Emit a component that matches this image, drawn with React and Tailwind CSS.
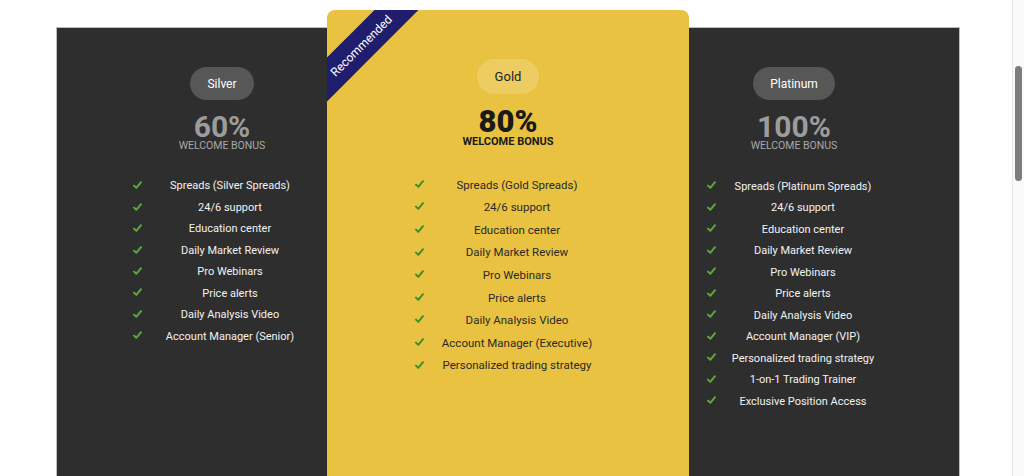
import React from 'react';

const silverFeatures = [
  'Spreads (Silver Spreads)',
  '24/6 support',
  'Education center',
  'Daily Market Review',
  'Pro Webinars',
  'Price alerts',
  'Daily Analysis Video',
  'Account Manager (Senior)',
];

const goldFeatures = [
  'Spreads (Gold Spreads)',
  '24/6 support',
  'Education center',
  'Daily Market Review',
  'Pro Webinars',
  'Price alerts',
  'Daily Analysis Video',
  'Account Manager (Executive)',
  'Personalized trading strategy',
];

const platinumFeatures = [
  'Spreads (Platinum Spreads)',
  '24/6 support',
  'Education center',
  'Daily Market Review',
  'Pro Webinars',
  'Price alerts',
  'Daily Analysis Video',
  'Account Manager (VIP)',
  'Personalized trading strategy',
  '1-on-1 Trading Trainer',
  'Exclusive Position Access',
];

const Check = ({ color }) => (
  <svg width="9" height="8" viewBox="0 0 9 8" className="-mt-[3px]">
    <path d="M1 4.6 L3.3 6.8 L8 1.2" fill="none" stroke={color} strokeWidth="2" strokeLinecap="round" strokeLinejoin="round" />
  </svg>
);

const FeatureList = ({ items, className, rowClass, textClass, checkColor }) => (
  <ul className={className}>
    {items.map((item) => (
      <li key={item} className={`flex items-center ${rowClass}`}>
        <span className="w-[20px] flex items-center">
          <Check color={checkColor} />
        </span>
        <span className={`flex-1 text-center whitespace-nowrap ${textClass}`}>{item}</span>
      </li>
    ))}
  </ul>
);

const App = () => {
  return (
    <div className="flex h-[476px] overflow-hidden bg-white font-['Roboto',sans-serif]">
      <div className="flex-1 pt-[10px] pl-[56px]">
        <div className="grid grid-cols-[271px_362px_271px] w-[904px] h-full">
          {/* Silver */}
          <div className="mt-[17px] bg-[#2e2e2e] border-t border-l border-[#bdbdbd] pl-[60px] flex flex-col items-center pt-[39px]">
            <div className="h-[33px] px-[17px] rounded-full bg-[#575757] text-white text-[12px] flex items-center">Silver</div>
            <div className="mt-[14px] text-[30px] leading-[26px] font-bold text-[#9c9c9c]">60%</div>
            <div className="text-[10.5px] leading-[12px] text-[#a8a8a8]">WELCOME BONUS</div>
            <FeatureList
              items={silverFeatures}
              className="mt-[24px] ml-[16px] w-[174px] self-start"
              rowClass="h-[21.45px]"
              textClass="text-[11px] text-[#f2f2f2]"
              checkColor="#5ea83a"
            />
          </div>

          {/* Gold */}
          <div className="relative overflow-hidden rounded-t-[8px] bg-[#e8c240] flex flex-col items-center pt-[49px]">
            <div className="absolute left-[-46px] top-[20px] w-[160px] h-[31px] -rotate-45 bg-[#1f1d6e] text-white text-[12px] flex items-center justify-center">
              Recommended
            </div>
            <div className="h-[35px] px-[18px] rounded-full bg-[#edcd62] text-[#222] text-[13px] flex items-center">Gold</div>
            <div className="mt-[15px] text-[31px] leading-[26px] font-black text-[#1a1a1a]">80%</div>
            <div className="mt-[1px] text-[11px] leading-[12px] font-bold text-[#1a1a1a]">WELCOME BONUS</div>
            <FeatureList
              items={goldFeatures}
              className="mt-[26px] ml-[88px] w-[184px] self-start"
              rowClass="h-[22.6px]"
              textClass="text-[11.5px] text-[#2a2a2a]"
              checkColor="#3f8f2c"
            />
          </div>

          {/* Platinum */}
          <div className="mt-[17px] bg-[#2e2e2e] border-t border-r border-[#bdbdbd] pr-[60px] flex flex-col items-center pt-[39px]">
            <div className="h-[33px] px-[17px] rounded-full bg-[#575757] text-white text-[12px] flex items-center">Platinum</div>
            <div className="mt-[14px] text-[30px] leading-[26px] font-bold text-[#9c9c9c]">100%</div>
            <div className="text-[10.5px] leading-[12px] text-[#a8a8a8]">WELCOME BONUS</div>
            <FeatureList
              items={platinumFeatures}
              className="mt-[24px] ml-[18px] w-[172px] self-start"
              rowClass="h-[21.5px]"
              textClass="text-[11px] text-[#f2f2f2]"
              checkColor="#5ea83a"
            />
          </div>
        </div>
      </div>

      {/* scrollbar */}
      <div className="w-[12px] border-l border-[#e6e6e6] bg-[#fafafa] pt-[66px] flex justify-center">
        <div className="w-[7px] h-[115px] rounded-full bg-[#7d7d7d]" />
      </div>
    </div>
  );
};

export default App;
